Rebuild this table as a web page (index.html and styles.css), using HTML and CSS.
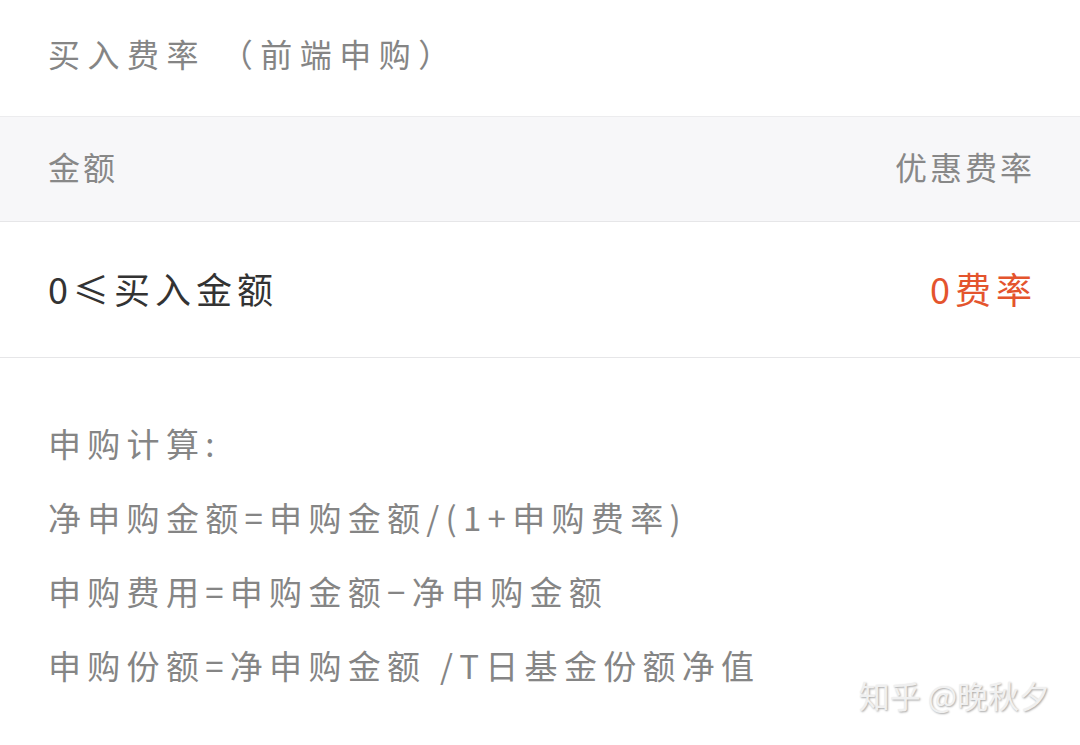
FILE: index.html
```html
<!DOCTYPE html>
<html lang="zh-CN">
<head>
  <meta charset="UTF-8" />
  <meta name="viewport" content="width=device-width, initial-scale=1" />
  <title>买入费率</title>
  <link rel="stylesheet" href="styles.css">
</head>
<body>

  <h2 class="fee-title">买入费率 （前端申购）</h2>

  <div class="fee-table">
    <div class="fee-row fee-head">
      <span>金额</span>
      <span>优惠费率</span>
    </div>
    <div class="fee-row fee-item">
      <span>0≤买入金额</span>
      <span class="rate">0费率</span>
    </div>
  </div>

  <div class="calc">
    <p>申购计算:</p>
    <p>净申购金额=申购金额/(1+申购费率)</p>
    <p>申购费用=申购金额−净申购金额</p>
    <p>申购份额=净申购金额 /T日基金份额净值</p>
  </div>

  <div class="watermark">知乎 @晚秋夕</div>

</body>
</html>
```

FILE: styles.css
```css
/* Reset básico */
* {
  box-sizing: border-box;
}

body {
  margin: 0;
  background: #fff;
  font-family: "Noto Sans CJK SC", "Noto Sans", sans-serif;
  color: #888;
  width: 1080px;
  height: 745px;
  overflow: hidden;
  position: relative;
}

.fee-title {
  margin: 0;
  height: 116px;
  padding: 0 0 10px 48px;
  display: flex;
  align-items: center;
  font-size: 32px;
  font-weight: 400;
  letter-spacing: 7.5px;
  color: #858585;
}

.fee-row {
  display: flex;
  justify-content: space-between;
  align-items: center;
  padding: 0 48px;
  border-bottom: 1px solid #e6e6e8;
}

.fee-head {
  height: 106px;
  background: #f7f7f9;
  border-top: 1px solid #ececee;
  font-size: 32px;
  color: #888;
  letter-spacing: 3px;
  padding-bottom: 6px;
}

.fee-head span:last-child {
  margin-right: -3px;
}

.fee-item {
  height: 136px;
  font-size: 36px;
  color: #333;
  letter-spacing: 5px;
  padding-bottom: 4px;
}

.fee-item .rate {
  color: #e4542d;
  margin-right: -5px;
}

.calc {
  padding: 48px 48px 0;
  font-size: 33px;
  letter-spacing: 6.3px;
  color: #858585;
}

.calc p {
  margin: 0;
  line-height: 74px;
}

.watermark {
  position: absolute;
  right: 30px;
  bottom: 28px;
  font-size: 31px;
  color: #f0f0f0;
  text-shadow: 1px 1px 2px rgba(0, 0, 0, 0.35);
}
```
